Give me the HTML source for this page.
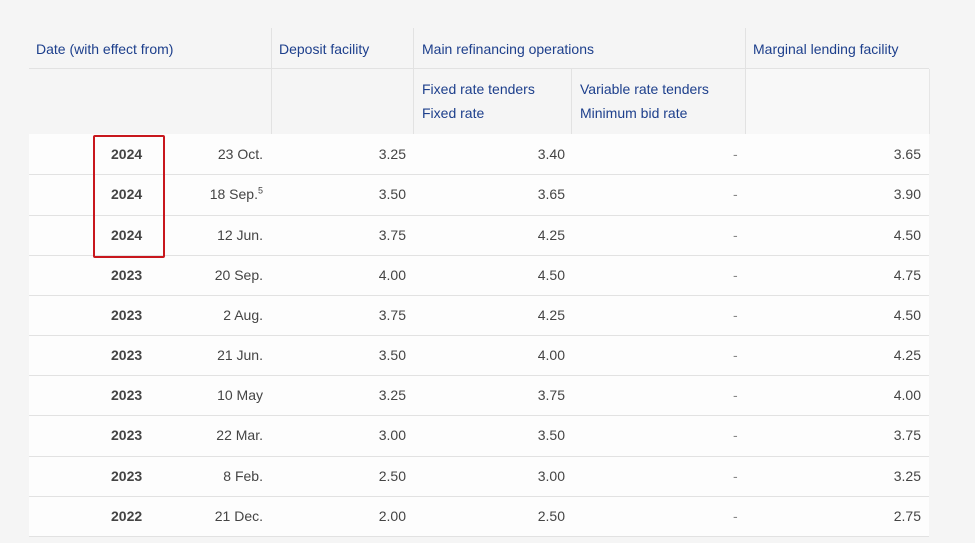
<!DOCTYPE html>
<html><head><style>
body{margin:0;background:#f5f5f5;font-family:"Liberation Sans",sans-serif;font-size:14px;color:#444;width:975px;height:543px;overflow:hidden;position:relative}
.h{position:absolute;color:#1d3f8c;font-size:14px}
.vl{position:absolute;width:1px;background:#e2e2e2}
.hl{position:absolute;height:1px;background:#e2e2e2}
.row{position:absolute;left:29px;width:900px;height:42px;box-sizing:border-box;background:#fdfdfd;border-top:1px solid #e2e2e2}
.row span{position:absolute;top:11px}
.y{left:82px;font-weight:bold;color:#444}
.d{right:666px}
.dep{right:523px}
.fix{right:364px}
.dash{left:704px;color:#888}
.mar{right:8px}
</style></head><body>
<div class="vl" style="left:271px;top:28px;height:106px"></div>
<div class="vl" style="left:413px;top:28px;height:106px"></div>
<div class="vl" style="left:745px;top:28px;height:106px"></div>
<div class="vl" style="left:571px;top:68px;height:66px"></div>
<div class="hl" style="left:29px;top:68px;width:900px"></div>
<div style="position:absolute;left:746px;top:69px;width:183px;height:65px;background:#f8f8f8;border-right:1px solid #e6e6e6"></div>
<div class="h" style="left:36px;top:41px">Date (with effect from)</div>
<div class="h" style="left:279px;top:41px">Deposit facility</div>
<div class="h" style="left:422px;top:41px">Main refinancing operations</div>
<div class="h" style="left:753px;top:41px">Marginal lending facility</div>
<div class="h" style="left:422px;top:81px">Fixed rate tenders</div>
<div class="h" style="left:422px;top:105px">Fixed rate</div>
<div class="h" style="left:580px;top:81px">Variable rate tenders</div>
<div class="h" style="left:580px;top:105px">Minimum bid rate</div>

<div class="row" style="top:134px;border-top:none;padding-top:1px"><span class="y" style="top:12px">2024</span><span class="d" style="top:12px">23 Oct.</span><span class="dep" style="top:12px">3.25</span><span class="fix" style="top:12px">3.40</span><span class="dash" style="top:12px">-</span><span class="mar" style="top:12px">3.65</span></div>
<div class="row" style="top:174px"><span class="y">2024</span><span class="d">18 Sep.<sup style="font-size:9px;line-height:0">5</sup></span><span class="dep">3.50</span><span class="fix">3.65</span><span class="dash">-</span><span class="mar">3.90</span></div>
<div class="row" style="top:215px"><span class="y">2024</span><span class="d">12 Jun.</span><span class="dep">3.75</span><span class="fix">4.25</span><span class="dash">-</span><span class="mar">4.50</span></div>
<div class="row" style="top:255px"><span class="y">2023</span><span class="d">20 Sep.</span><span class="dep">4.00</span><span class="fix">4.50</span><span class="dash">-</span><span class="mar">4.75</span></div>
<div class="row" style="top:295px"><span class="y">2023</span><span class="d">2 Aug.</span><span class="dep">3.75</span><span class="fix">4.25</span><span class="dash">-</span><span class="mar">4.50</span></div>
<div class="row" style="top:335px"><span class="y">2023</span><span class="d">21 Jun.</span><span class="dep">3.50</span><span class="fix">4.00</span><span class="dash">-</span><span class="mar">4.25</span></div>
<div class="row" style="top:375px"><span class="y">2023</span><span class="d">10 May</span><span class="dep">3.25</span><span class="fix">3.75</span><span class="dash">-</span><span class="mar">4.00</span></div>
<div class="row" style="top:415px"><span class="y">2023</span><span class="d">22 Mar.</span><span class="dep">3.00</span><span class="fix">3.50</span><span class="dash">-</span><span class="mar">3.75</span></div>
<div class="row" style="top:456px"><span class="y">2023</span><span class="d">8 Feb.</span><span class="dep">2.50</span><span class="fix">3.00</span><span class="dash">-</span><span class="mar">3.25</span></div>
<div class="row" style="top:496px;height:41px;border-bottom:1px solid #e2e2e2"><span class="y">2022</span><span class="d">21 Dec.</span><span class="dep">2.00</span><span class="fix">2.50</span><span class="dash">-</span><span class="mar">2.75</span></div>

<div style="position:absolute;left:93px;top:135px;width:68px;height:119px;border:2px solid #c8171d;border-radius:2px"></div>
</body></html>
